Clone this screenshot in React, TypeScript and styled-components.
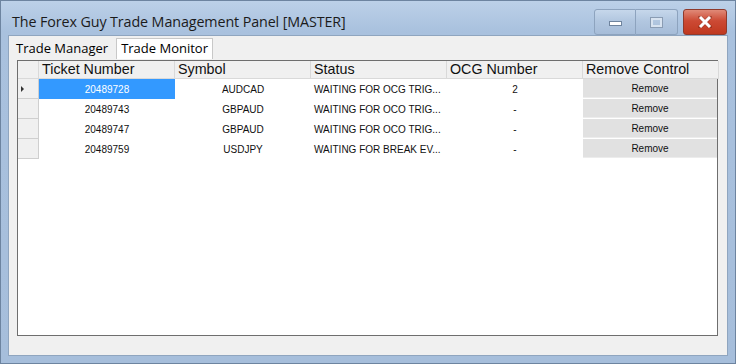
import React from "react";
import styled, { createGlobalStyle } from "styled-components";

const GlobalStyle = createGlobalStyle`
  html, body {
    margin: 0;
    padding: 0;
    width: 736px;
    height: 364px;
    overflow: hidden;
    background: #ffffff;
  }
`;

interface TradeRow {
  ticket: string;
  symbol: string;
  status: string;
  ocg: string;
}

const rows: TradeRow[] = [
  { ticket: "20489728", symbol: "AUDCAD", status: "WAITING FOR OCG TRIG...", ocg: "2" },
  { ticket: "20489743", symbol: "GBPAUD", status: "WAITING FOR OCO TRIG...", ocg: "-" },
  { ticket: "20489747", symbol: "GBPAUD", status: "WAITING FOR OCO TRIG...", ocg: "-" },
  { ticket: "20489759", symbol: "USDJPY", status: "WAITING FOR BREAK EV...", ocg: "-" },
];

const Window = styled.div`
  box-sizing: border-box;
  width: 736px;
  height: 364px;
  display: flex;
  flex-direction: column;
  background: linear-gradient(180deg, #bcd0e8 0%, #a9c1de 30px, #a6bedb 100%);
  border: 1px solid #6d84a0;
  font-family: "Open Sans", "Noto Sans", sans-serif;
`;

const TitleBar = styled.div`
  height: 34px;
  display: flex;
  align-items: center;
  padding-left: 11px;
  padding-right: 8px;
`;

const Title = styled.div`
  flex: 1;
  font-size: 14.3px;
  color: #1b1b1b;
  padding-top: 6px;
  letter-spacing: -0.1px;
`;

const Controls = styled.div`
  display: flex;
  align-self: flex-start;
  margin-top: 8px;
`;

const CaptionButton = styled.div<{ $kind: "min" | "max" | "close" }>`
  box-sizing: border-box;
  width: ${(p) => (p.$kind === "close" ? "44px" : "42px")};
  height: 26px;
  margin-left: ${(p) => (p.$kind === "close" ? "5px" : "0")};
  display: flex;
  align-items: center;
  justify-content: center;
  border: 1px solid ${(p) => (p.$kind === "close" ? "#8f3a2c" : "#8da3be")};
  border-left-width: ${(p) => (p.$kind === "max" ? "0" : "1px")};
  border-radius: ${(p) =>
    p.$kind === "min" ? "3px 0 0 3px" : p.$kind === "max" ? "0 3px 3px 0" : "3px"};
  background: ${(p) =>
    p.$kind === "close"
      ? "linear-gradient(180deg, #e08a78 0%, #cc4a34 45%, #c0381f 100%)"
      : "linear-gradient(180deg, #c6d7eb 0%, #b2c7e0 45%, #a6bcd8 100%)"};
`;

const MinGlyph = styled.div`
  width: 13px;
  height: 5px;
  margin-top: 2px;
  background: #ffffff;
  border: 1px solid #6f849e;
  box-sizing: border-box;
`;

const MaxGlyph = styled.div`
  width: 11px;
  height: 9px;
  box-sizing: border-box;
  border: 2px solid #d8e3f0;
  outline: 1px solid #8a9cb3;
`;

const Client = styled.div`
  flex: 1;
  margin: 0 7px 7px 7px;
  background: #f0f0f0;
  display: flex;
  flex-direction: column;
  border: 1px solid #8fa5bf;
`;

const TabStrip = styled.div`
  display: flex;
  align-items: flex-end;
  height: 23px;
  padding-left: 1px;
`;

const Tab = styled.div<{ $active?: boolean }>`
  box-sizing: border-box;
  height: 21px;
  padding: 0 ${(p) => (p.$active ? "4px" : "5px")};
  margin-left: ${(p) => (p.$active ? "2px" : "0")};
  font-size: 13px;
  line-height: 19px;
  color: #000000;
  border: 1px solid ${(p) => (p.$active ? "#c8c8c8" : "transparent")};
  border-bottom: none;
  background: ${(p) => (p.$active ? "#ffffff" : "transparent")};
`;

const GridBox = styled.div`
  box-sizing: border-box;
  margin: 1px 9px 0 8px;
  height: 276px;
  background: #ffffff;
  border: 1px solid #6e6e6e;
  display: grid;
  grid-template-columns: 21px repeat(5, 136px);
  grid-auto-rows: 20px;
  grid-template-rows: 18px;
  align-content: start;
  font-family: "Liberation Sans", Arial, sans-serif;
`;

const HeadCell = styled.div`
  box-sizing: border-box;
  background: #f0f0f0;
  border-right: 1px solid #d9d9d9;
  border-bottom: 1px solid #d9d9d9;
  font-size: 14.3px;
  line-height: 17px;
  color: #111111;
  padding-left: 3px;
  white-space: nowrap;
  overflow: hidden;
`;

const RowHead = styled.div`
  box-sizing: border-box;
  background: #f0f0f0;
  border-right: 1px solid #cfcfcf;
  border-bottom: 1px solid #cfcfcf;
  display: flex;
  align-items: center;
  padding-left: 3px;
`;

const Arrow = styled.div`
  width: 0;
  height: 0;
  border-top: 3px solid transparent;
  border-bottom: 3px solid transparent;
  border-left: 3px solid #333333;
`;

const Cell = styled.div<{ $align?: "left" | "center"; $selected?: boolean }>`
  box-sizing: border-box;
  display: flex;
  align-items: center;
  justify-content: ${(p) => (p.$align === "left" ? "flex-start" : "center")};
  padding-left: ${(p) => (p.$align === "left" ? "3px" : "0")};
  font-size: 10px;
  color: ${(p) => (p.$selected ? "#ffffff" : "#111111")};
  background: ${(p) => (p.$selected ? "#3399ff" : "#ffffff")};
  white-space: nowrap;
  overflow: hidden;
`;

const ButtonCell = styled.div`
  box-sizing: border-box;
  padding: 0 2px 1px 0;
  display: flex;
`;

const RemoveButton = styled.div`
  flex: 1;
  display: flex;
  align-items: center;
  justify-content: center;
  background: #e1e1e1;
  border-bottom: 1px solid #ececec;
  font-size: 10px;
  color: #111111;
`;

export default function App() {
  return (
    <>
      <GlobalStyle />
      <Window>
        <TitleBar>
          <Title>The Forex Guy Trade Management Panel [MASTER]</Title>
          <Controls>
            <CaptionButton $kind="min">
              <MinGlyph />
            </CaptionButton>
            <CaptionButton $kind="max">
              <MaxGlyph />
            </CaptionButton>
            <CaptionButton $kind="close">
              <svg width="14" height="12" viewBox="0 0 14 12">
                <path
                  d="M2 1 L12 11 M12 1 L2 11"
                  stroke="#5a1a10"
                  strokeWidth="4"
                  strokeLinecap="square"
                  opacity="0.35"
                />
                <path d="M2 1 L12 11 M12 1 L2 11" stroke="#ffffff" strokeWidth="3" />
              </svg>
            </CaptionButton>
          </Controls>
        </TitleBar>
        <Client>
          <TabStrip>
            <Tab>Trade Manager</Tab>
            <Tab $active>Trade Monitor</Tab>
          </TabStrip>
          <GridBox>
            <HeadCell />
            <HeadCell>Ticket Number</HeadCell>
            <HeadCell>Symbol</HeadCell>
            <HeadCell>Status</HeadCell>
            <HeadCell>OCG Number</HeadCell>
            <HeadCell>Remove Control</HeadCell>
            {rows.map((r, i) => (
              <React.Fragment key={r.ticket}>
                <RowHead>{i === 0 && <Arrow />}</RowHead>
                <Cell $selected={i === 0}>{r.ticket}</Cell>
                <Cell>{r.symbol}</Cell>
                <Cell $align="left">{r.status}</Cell>
                <Cell>{r.ocg}</Cell>
                <ButtonCell>
                  <RemoveButton>Remove</RemoveButton>
                </ButtonCell>
              </React.Fragment>
            ))}
          </GridBox>
        </Client>
      </Window>
    </>
  );
}
